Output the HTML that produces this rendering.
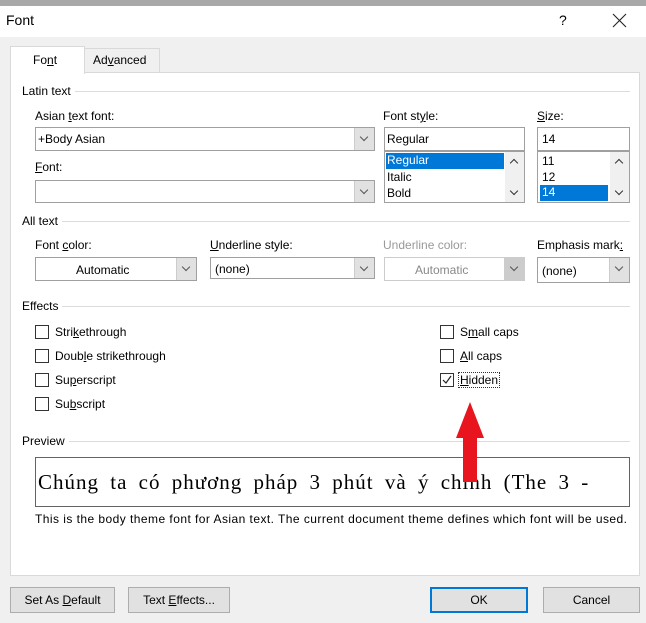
<!DOCTYPE html>
<html><head><meta charset="utf-8"><style>
*{box-sizing:border-box;margin:0;padding:0}
body{width:646px;height:623px;background:#f0f0f0;font-family:"Liberation Sans",sans-serif;font-size:12px;color:#000;position:relative;overflow:hidden}
.a{position:absolute;white-space:nowrap}
.box{position:absolute;background:#fff;border:1px solid #a0a0a0}
.dd{position:absolute;top:0;bottom:0;right:0;width:20px;background:#e1e1e1;border-left:1px solid #ccc}
.dd:after{content:"";position:absolute;left:6px;top:6px;width:5px;height:5px;border-right:1px solid #555;border-bottom:1px solid #555;transform:rotate(45deg)}
.up,.dn{position:absolute;left:6px;width:6px;height:6px;border-right:1.5px solid #333;border-bottom:1.5px solid #333}
.up{top:8px;transform:rotate(-135deg)}
.dn{top:36px;transform:rotate(45deg)}
.line{position:absolute;height:1px;background:#dcdcdc}
.cb{position:absolute;width:14px;height:14px;border:1px solid #333;background:#fff}
.btn{position:absolute;background:#e1e1e1;border:1px solid #adadad;text-align:center;line-height:24px;font-size:12px}
u{text-decoration:underline}
</style></head><body>
<div class="a" style="left:0;top:0;width:646px;height:6px;background:#a8a8a8"></div>
<div class="a" style="left:0;top:6px;width:646px;height:31px;background:#fff"></div>
<div class="a" style="left:6px;top:12px;font-size:14px">Font</div>
<div class="a" style="left:559px;top:12px;font-size:14px">?</div>
<svg class="a" style="left:612px;top:13px" width="16" height="16"><path d="M1 1L14 14M14 1L1 14" stroke="#222" stroke-width="1.1"/></svg>

<div class="a" style="left:84px;top:48px;width:76px;height:25px;background:#f0f0f0;border:1px solid #d9d9d9;border-bottom:none"></div>
<div class="a" style="left:93px;top:53px">Ad<u>v</u>anced</div>
<div class="a" style="left:10px;top:72px;width:630px;height:504px;background:#fff;border:1px solid #d9d9d9"></div>
<div class="a" style="left:10px;top:46px;width:75px;height:28px;background:#fff;border:1px solid #d9d9d9;border-bottom:none"></div>
<div class="a" style="left:33px;top:53px">Fo<u>n</u>t</div>

<div class="line" style="left:66px;top:91px;width:564px"></div><div class="a" style="left:22px;top:84px;background:#fff;padding-right:4px">Latin text</div>
<div class="a" style="left:35px;top:109px">Asian <u>t</u>ext font:</div>
<div class="box" style="left:35px;top:127px;width:340px;height:24px"><span class="a" style="left:2px;top:4px">+Body Asian</span><div class="dd"></div></div>
<div class="a" style="left:35px;top:160px"><u>F</u>ont:</div>
<div class="box" style="left:35px;top:180px;width:340px;height:23px"><div class="dd"></div></div>

<div class="a" style="left:383px;top:109px">Font st<u>y</u>le:</div>
<div class="box" style="left:384px;top:127px;width:141px;height:24px"><span class="a" style="left:2px;top:4px">Regular</span></div>
<div class="box" style="left:384px;top:151px;width:141px;height:52px">
<div class="a" style="left:1px;top:1px;width:118px;height:16px;background:#0078d7;color:#fff;padding-left:1px">Regular</div>
<div class="a" style="left:2px;top:18px">Italic</div><div class="a" style="left:2px;top:34px">Bold</div>
<div class="a" style="left:120px;top:0;width:19px;height:50px;background:#f0f0f0"><i class="up"></i><i class="dn"></i></div></div>

<div class="a" style="left:537px;top:109px"><u>S</u>ize:</div>
<div class="box" style="left:537px;top:127px;width:93px;height:24px"><span class="a" style="left:4px;top:4px">14</span></div>
<div class="box" style="left:537px;top:151px;width:93px;height:52px">
<div class="a" style="left:4px;top:2px">11</div><div class="a" style="left:4px;top:18px">12</div>
<div class="a" style="left:2px;top:33px;width:68px;height:16px;background:#0078d7;color:#fff;padding-left:2px">14</div>
<div class="a" style="left:72px;top:0;width:19px;height:50px;background:#f0f0f0"><i class="up"></i><i class="dn"></i></div></div>

<div class="line" style="left:56px;top:221px;width:574px"></div><div class="a" style="left:22px;top:214px;background:#fff;padding-right:4px">All text</div>
<div class="a" style="left:35px;top:238px">Font <u>c</u>olor:</div>
<div class="box" style="left:35px;top:257px;width:162px;height:24px"><span class="a" style="left:40px;top:5px">Automatic</span><div class="dd"></div></div>
<div class="a" style="left:210px;top:238px"><u>U</u>nderline style:</div>
<div class="box" style="left:210px;top:257px;width:165px;height:22px"><span class="a" style="left:4px;top:4px">(none)</span><div class="dd"></div></div>
<div class="a" style="left:383px;top:238px;color:#999">Underline color:</div>
<div class="box" style="left:384px;top:257px;width:141px;height:24px;border-color:#ccc"><span class="a" style="left:30px;top:5px;color:#888">Automatic</span><div class="dd" style="background:#ccc"></div></div>
<div class="a" style="left:537px;top:238px">Emphasis mark<u>:</u></div>
<div class="box" style="left:537px;top:257px;width:93px;height:26px"><span class="a" style="left:4px;top:6px">(none)</span><div class="dd"></div></div>

<div class="line" style="left:55px;top:306px;width:575px"></div><div class="a" style="left:22px;top:299px;background:#fff;padding-right:4px">Effects</div>
<div class="cb" style="left:35px;top:325px"></div><div class="a" style="left:55px;top:325px">Stri<u>k</u>ethrough</div>
<div class="cb" style="left:35px;top:349px"></div><div class="a" style="left:55px;top:349px">Doub<u>l</u>e strikethrough</div>
<div class="cb" style="left:35px;top:373px"></div><div class="a" style="left:55px;top:373px">Su<u>p</u>erscript</div>
<div class="cb" style="left:35px;top:397px"></div><div class="a" style="left:55px;top:397px">Su<u>b</u>script</div>
<div class="cb" style="left:440px;top:325px"></div><div class="a" style="left:460px;top:325px">S<u>m</u>all caps</div>
<div class="cb" style="left:440px;top:349px"></div><div class="a" style="left:460px;top:349px"><u>A</u>ll caps</div>
<div class="cb" style="left:440px;top:373px"><svg width="12" height="12" style="position:absolute;left:0;top:0"><path d="M2 6 L5 9 L10 2" fill="none" stroke="#222" stroke-width="1.2"/></svg></div>
<div class="a" style="left:458px;top:372px;border:1px dotted #333;padding:0 1px"><u>H</u>idden</div>

<div class="line" style="left:58px;top:441px;width:572px"></div><div class="a" style="left:22px;top:434px;background:#fff;padding-right:4px">Preview</div>
<div class="a" style="left:35px;top:457px;width:595px;height:50px;border:1px solid #646464;background:#fff;overflow:hidden"><span class="a" style="left:2px;top:12px;font-family:'Liberation Serif','Noto Serif CJK SC',serif;font-size:21px;letter-spacing:1px;word-spacing:5px">Chúng ta có phương pháp 3 phút và ý chính (The 3 -</span></div>
<div class="a" style="left:35px;top:512px;font-size:12px;letter-spacing:0.45px">This is the body theme font for Asian text. The current document theme defines which font will be used.</div>

<svg class="a" style="left:450px;top:400px" width="40" height="84"><polygon points="20,2 6,38 13,38 13,82 27,82 27,38 34,38" fill="#e8141e"/></svg>

<div class="btn" style="left:10px;top:587px;width:105px;height:26px">Set As <u>D</u>efault</div>
<div class="btn" style="left:128px;top:587px;width:102px;height:26px">Text <u>E</u>ffects...</div>
<div class="btn" style="left:430px;top:587px;width:98px;height:26px;border:2px solid #0078d7;line-height:22px">OK</div>
<div class="btn" style="left:543px;top:587px;width:97px;height:26px">Cancel</div>
</body></html>
